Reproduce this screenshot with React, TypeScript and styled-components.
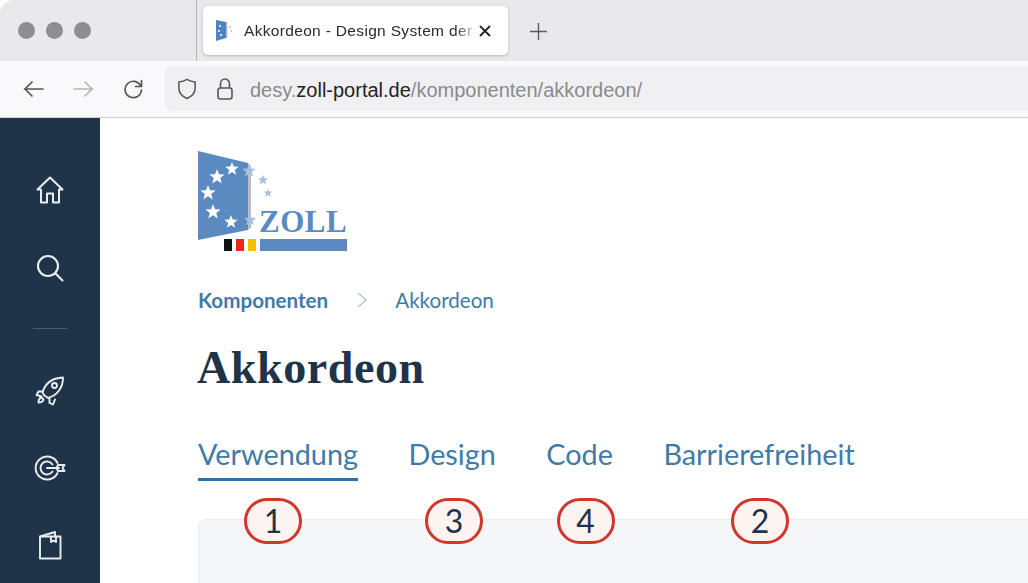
import React from "react";
import styled, { createGlobalStyle } from "styled-components";

const GlobalStyle = createGlobalStyle`
  html, body {
    margin: 0;
    padding: 0;
    background: #fff;
    overflow: hidden;
  }
  * {
    box-sizing: border-box;
  }
`;

const Page = styled.div`
  width: 1028px;
  height: 583px;
  display: flex;
  flex-direction: column;
  overflow: hidden;
  font-family: "Liberation Sans", Arial, sans-serif;
`;

const TabBar = styled.div`
  height: 61px;
  flex: none;
  display: flex;
  align-items: stretch;
  background: #e9e9eb;
  border-top-left-radius: 14px;
`;

const Traffic = styled.div`
  width: 197px;
  flex: none;
  display: flex;
  align-items: center;
  gap: 11px;
  padding-left: 18px;
  border-right: 1px solid #b4b4b6;
`;

const Dot = styled.span`
  width: 17px;
  height: 17px;
  border-radius: 50%;
  background: #8e8e90;
`;

const Tab = styled.div`
  width: 305px;
  height: 49px;
  margin: 6px 0 0 6px;
  padding: 0 16px 0 13px;
  display: flex;
  align-items: center;
  background: #fff;
  border-radius: 5px;
  box-shadow: 0 1px 3px rgba(0, 0, 0, 0.22);
`;

const Favicon = styled.svg`
  flex: none;
`;

const TabTitle = styled.span`
  margin-left: 11px;
  width: 229px;
  flex: none;
  white-space: nowrap;
  font-size: 15.5px;
  letter-spacing: 0.33px;
  color: #2a2a2e;
  -webkit-mask-image: linear-gradient(to right, #000 92%, rgba(0, 0, 0, 0.25) 100%);
  mask-image: linear-gradient(to right, #000 92%, rgba(0, 0, 0, 0.25) 100%);
`;

const TabClose = styled.svg`
  margin-left: 6px;
  flex: none;
`;

const NewTab = styled.svg`
  margin: 23px 0 0 22px;
  flex: none;
`;

const AddressBar = styled.div`
  height: 57px;
  flex: none;
  display: flex;
  align-items: center;
  padding: 5px 0 6px;
  background: #f9f9fb;
  border-bottom: 1px solid #cfcfd1;
`;

const NavButtons = styled.div`
  width: 165px;
  flex: none;
  display: flex;
  align-items: center;
  gap: 29px;
  padding-left: 23px;
`;

const UrlBox = styled.div`
  flex: 1;
  height: 45px;
  display: flex;
  align-items: center;
  padding-left: 12px;
  background: #f0f0f2;
  border-radius: 5px 0 0 5px;
`;

const UrlIcon = styled.svg`
  flex: none;
  margin-right: 20px;
`;

const LockIcon = styled(UrlIcon)`
  margin-right: 17px;
`;

const UrlText = styled.span`
  padding-top: 3px;
  font-size: 20px;
  color: #8a8a8e;
  white-space: nowrap;

  b {
    font-weight: 400;
    color: #232326;
  }
`;

const Body = styled.div`
  flex: 1;
  min-height: 0;
  display: flex;
`;

const Sidebar = styled.nav`
  width: 100px;
  flex: none;
  display: flex;
  flex-direction: column;
  align-items: center;
  padding-top: 58px;
  background: #1f3449;
  color: #e9edf1;
`;

const NavIcon = styled.svg<{ $gap: number }>`
  display: block;
  flex: none;
  margin-bottom: ${(props) => props.$gap}px;
`;

const NavDivider = styled.div`
  width: 34px;
  height: 1px;
  margin-bottom: 47px;
  background: rgba(255, 255, 255, 0.2);
`;

const Main = styled.main`
  flex: 1;
  min-width: 0;
  padding: 32px 0 0 97px;
  background: #fff;
`;

const Logo = styled.svg`
  display: block;
`;

const Breadcrumb = styled.div`
  display: flex;
  align-items: center;
  height: 24px;
  margin: 34px 0 0 1px;
  font-family: "Lato", sans-serif;
  font-size: 20.6px;
  color: #3f7ba6;
`;

const Crumb = styled.span<{ $strong?: boolean }>`
  font-weight: ${(props) => (props.$strong ? 700 : 400)};
`;

const CrumbSep = styled.svg`
  margin: 0 28px 0 29px;
`;

const Title = styled.h1`
  margin: 29px 0 0;
  font-family: "Liberation Serif", serif;
  font-size: 46px;
  line-height: 54px;
  font-weight: 700;
  letter-spacing: 0.6px;
  color: #1f3449;
`;

const Tabs = styled.div`
  display: flex;
  gap: 50.5px;
  margin: 41px 0 0 1px;
`;

const TabItem = styled.div<{ $active?: boolean }>`
  position: relative;
  height: 45px;
  font-family: "Lato", sans-serif;
  font-size: 28.8px;
  line-height: 36px;
  color: #3f7ba6;
  white-space: nowrap;
  border-bottom: 3px solid ${(props) => (props.$active ? "#2f73a5" : "transparent")};
`;

const Badge = styled.span<{ $shift: number }>`
  position: absolute;
  top: 62px;
  left: calc(50% + ${(props) => props.$shift}px);
  transform: translateX(-50%);
  z-index: 1;
  width: 58px;
  height: 46px;
  display: flex;
  align-items: center;
  justify-content: center;
  background: #fdf4f2;
  border: 3px solid #d2352b;
  border-radius: 23px;
  font-family: "Lato", sans-serif;
  font-size: 32px;
  line-height: 1;
  color: #1f3449;
`;

const Card = styled.section`
  height: 120px;
  margin: 38px -20px 0 1px;
  background: #f5f6f8;
  border: 1px solid #ebecee;
  border-radius: 8px;
`;

const tabs = [
  { label: "Verwendung", badge: 1, shift: -5, active: true },
  { label: "Design", badge: 3, shift: 2 },
  { label: "Code", badge: 4, shift: 6 },
  { label: "Barrierefreiheit", badge: 2, shift: 1 },
];

// stern als polygon, cx/cy mitte, r aussenradius
const starPoints = (cx: number, cy: number, r: number) => {
  const pts: string[] = [];
  for (let i = 0; i < 10; i++) {
    const rad = i % 2 === 0 ? r : r * 0.42;
    const a = (Math.PI / 5) * i - Math.PI / 2;
    pts.push(`${(cx + rad * Math.cos(a)).toFixed(2)},${(cy + rad * Math.sin(a)).toFixed(2)}`);
  }
  return pts.join(" ");
};

const ZollLogo = () => (
  <Logo width="152" height="104" viewBox="0 0 152 104">
    <polygon points="1,1 51,13 51,80 1,90" fill="#5a8ac0" />
    <polygon points="51,13 54,16 54,78 51,80" fill="#b9bcc0" />
    {[
      [35, 19, 7],
      [20, 27, 8],
      [11, 43, 8],
      [16, 62, 8],
      [34, 72, 7],
    ].map(([x, y, r]) => (
      <polygon key={`${x}-${y}`} points={starPoints(x, y, r)} fill="#fff" />
    ))}
    {[
      [52, 21, 7],
      [66, 30, 5.5],
      [71, 43, 4.5],
      [53, 70, 6.5],
    ].map(([x, y, r]) => (
      <polygon key={`${x}-${y}`} points={starPoints(x, y, r)} fill="#a9c0dc" />
    ))}
    <text x="62" y="82" fontFamily="'Liberation Serif', serif" fontWeight="700" fontSize="31" letterSpacing="0.5" fill="#5a8ac0">
      ZOLL
    </text>
    <rect x="27" y="89" width="8" height="12" fill="#111" />
    <rect x="39" y="89" width="8" height="12" fill="#e8291c" />
    <rect x="51" y="89" width="8" height="12" fill="#f6c000" />
    <rect x="63" y="89" width="87" height="12" fill="#5a8ac0" />
  </Logo>
);

const App = () => {
  return (
    <Page>
      <GlobalStyle />
      <TabBar>
        <Traffic>
          <Dot />
          <Dot />
          <Dot />
        </Traffic>
        <Tab>
          <Favicon width="17" height="21" viewBox="0 0 17 21">
            <polygon points="0,0 10,2 10,18 0,21" fill="#4f83bd" />
            <rect x="10" y="2" width="1.5" height="16" fill="#b9c6d6" />
            <circle cx="4" cy="6" r="1" fill="#fff" />
            <circle cx="3" cy="11" r="1" fill="#fff" />
            <circle cx="5" cy="15" r="1" fill="#fff" />
            <circle cx="14" cy="7" r="0.9" fill="#a9c0dc" />
            <circle cx="15.5" cy="11" r="0.9" fill="#a9c0dc" />
          </Favicon>
          <TabTitle>Akkordeon - Design System der</TabTitle>
          <TabClose width="12" height="12" viewBox="0 0 12 12">
            <path d="M1.5 1.5l9 9M10.5 1.5l-9 9" stroke="#26262a" strokeWidth="1.9" strokeLinecap="round" />
          </TabClose>
        </Tab>
        <NewTab width="17" height="17" viewBox="0 0 17 17">
          <path d="M8.500 0v17M0 8.500h17" stroke="#5b5b60" strokeWidth="1.400" />
        </NewTab>
      </TabBar>

      <AddressBar>
        <NavButtons>
          <svg width="21" height="18" viewBox="0 0 21 18" fill="none" stroke="#55555a" strokeWidth="1.7" strokeLinecap="round" strokeLinejoin="round">
            <path d="M20 9H1.500M9 2L2 9l7 7" />
          </svg>
          <svg width="21" height="18" viewBox="0 0 21 18" fill="none" stroke="#b5b5b9" strokeWidth="1.7" strokeLinecap="round" strokeLinejoin="round">
            <path d="M1 9h18.500M12 2l7 7-7 7" />
          </svg>
          <svg width="20" height="20" viewBox="0 0 20 20" fill="none" stroke="#55555a" strokeWidth="1.7" strokeLinecap="round" strokeLinejoin="round">
            <path d="M17.500 6.500A8.200 8.200 0 1 0 18.500 11" />
            <path d="M18.500 1.500v6h-6" />
          </svg>
        </NavButtons>
        <UrlBox>
          <UrlIcon width="20" height="22" viewBox="0 0 20 23" fill="none" stroke="#55555a" strokeWidth="1.6" strokeLinejoin="round">
            <path d="M10 1.500c2.500 1.600 5 2.400 8.500 2.800v6.500c0 4.800-3.200 8.300-8.500 10.700C4.700 19.100 1.500 15.600 1.500 10.800V4.300C5 3.900 7.500 3.100 10 1.500z" />
          </UrlIcon>
          <LockIcon width="16" height="22" viewBox="0 0 16 22" fill="none" stroke="#55555a" strokeWidth="1.6">
            <path d="M3.500 10V5.500a4.500 4.500 0 0 1 9 0V10" />
            <rect x="1" y="10" width="14" height="11" rx="2.500" />
          </LockIcon>
          <UrlText>
            desy.<b>zoll-portal.de</b>/komponenten/akkordeon/
          </UrlText>
        </UrlBox>
      </AddressBar>

      <Body>
        <Sidebar>
          <NavIcon $gap={50} width="28" height="28" viewBox="0 0 28 28" fill="none" stroke="currentColor" strokeWidth="2" strokeLinejoin="round" strokeLinecap="round">
            <path d="M1.500 13.500L14 1.500l12.500 12h-3.500V26.500h-6V17.500h-6v9h-6V13.500z" />
          </NavIcon>
          <NavIcon $gap={46} width="28" height="28" viewBox="0 0 28 28" fill="none" stroke="currentColor" strokeWidth="2.100" strokeLinecap="round">
            <circle cx="12" cy="12" r="10" />
            <path d="M19.500 19.500l7 7" />
          </NavIcon>
          <NavDivider />
          <NavIcon $gap={49} width="30" height="30" viewBox="0 0 30 30" fill="none" stroke="currentColor" strokeWidth="1.900" strokeLinejoin="round" strokeLinecap="round">
            <path d="M9.500 19.500l-2-3C10 8 17 2 28 1.500 28 12 22 19.500 13 22z" />
            <circle cx="19.500" cy="9.500" r="2.500" />
            <path d="M8 15.500H3.500L1.500 19l5 1.500M14.500 22.500V27l3.500 1.500 2-5" />
            <path d="M6.500 21.500c-2 .5-3 2-3 5 3 0 4.500-1 5-3z" />
          </NavIcon>
          <NavIcon $gap={49} width="32" height="26" viewBox="0 0 32 26" fill="none" stroke="currentColor" strokeWidth="1.900" strokeLinecap="round" strokeLinejoin="round">
            <path d="M23.500 8A11.500 11.500 0 1 0 23.500 18" />
            <path d="M18.500 9.500A6.500 6.500 0 1 0 18.500 16.500" />
            <path d="M13 13h12M24 10h6.500l-2 3 2 3H24l-1.500-3z" />
          </NavIcon>
          <NavIcon $gap={0} width="24" height="30" viewBox="0 0 24 30" fill="none" stroke="currentColor" strokeWidth="1.900" strokeLinejoin="round">
            <path d="M2 6.500h20.500v22H2z" />
            <path d="M2 6.500L17 2v4.500" />
            <path d="M13 6.500v5.500l2.500-1.500L18 12V6.500" />
          </NavIcon>
        </Sidebar>

        <Main>
          <ZollLogo />
          <Breadcrumb>
            <Crumb $strong>Komponenten</Crumb>
            <CrumbSep width="10" height="16" viewBox="0 0 10 16" fill="none" stroke="#a9c4d8" strokeWidth="1.400">
              <path d="M1 1l8 7-8 7" />
            </CrumbSep>
            <Crumb>Akkordeon</Crumb>
          </Breadcrumb>
          <Title>Akkordeon</Title>
          <Tabs>
            {tabs.map((tab) => (
              <TabItem key={tab.label} $active={tab.active}>
                {tab.label}
                <Badge $shift={tab.shift}>{tab.badge}</Badge>
              </TabItem>
            ))}
          </Tabs>
          <Card />
        </Main>
      </Body>
    </Page>
  );
};

export default App;
